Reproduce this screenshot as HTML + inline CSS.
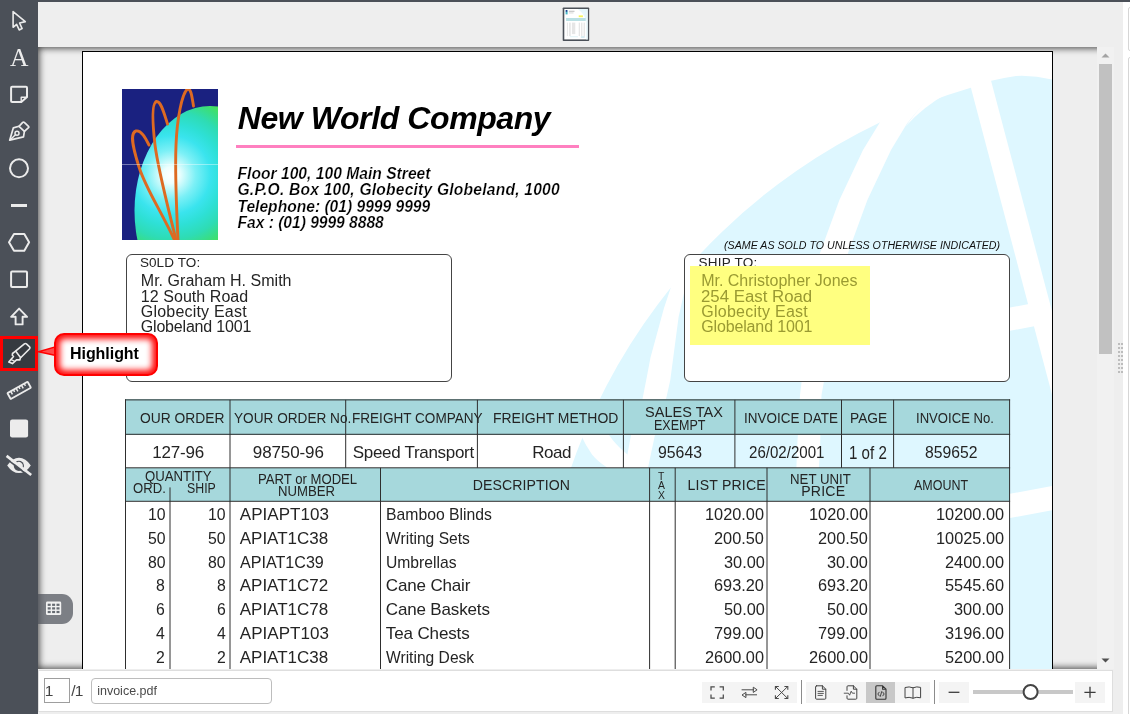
<!DOCTYPE html>
<html lang="en">
<head>
<meta charset="utf-8">
<title>invoice.pdf</title>
<style>
html,body{margin:0;padding:0}
body{width:1130px;height:714px;overflow:hidden;background:#eeeeee;position:relative;font-family:"Liberation Sans",Arial,sans-serif;color:#333}
#app{position:absolute;left:0;top:0;width:1130px;height:714px;overflow:hidden;will-change:transform}
.abs{position:absolute}
.t{position:absolute;white-space:nowrap;color:#242424;transform-origin:0 50%}
#side{position:absolute;left:0;top:0;width:38px;height:714px;background:#4b5058}
#topline{position:absolute;left:0;top:0;width:1130px;height:2px;background:#4b5058}
#viewer{position:absolute;left:38px;top:47px;width:1110px;height:622px;overflow:hidden;background:#eeeeee;box-shadow:inset 0 0 7px 1px rgba(0,0,0,.75)}
#page{position:absolute;left:44px;top:4px;width:969px;height:1300px;background:#fff;border:1px solid #000;overflow:hidden}
#bbar{position:absolute;left:38px;top:670px;width:1073px;height:40px;background:#fff;border:1px solid #dedede}
.hd{position:absolute;background:#a6d8dc}
.ln{position:absolute;background:#484848}
.btn{position:absolute;top:682px;height:21px;background:#f4f4f4}
</style>
</head>
<body>
<div id="app">

<div id="topline"></div>
<svg class="abs" style="left:562px;top:7px" width="28" height="35" viewBox="0 0 28 35">
<rect x="0.7" y="0.4" width="26.5" height="33.7" rx="0.8" fill="#4b5058"/>
<g transform="translate(2.3 2)">
<rect width="23.4" height="30.4" fill="#fff"/>
<path d="M13.5 0H23.4V30.4H22V12Q20 5 13.5 0Z" fill="#e6f7fc"/>
<rect x="1.3" y="1.2" width="2" height="4.2" fill="#49b9c9"/><rect x="1.5" y="1" width="1.4" height="1.8" fill="#2c3a90"/>
<rect x="4.6" y="1.8" width="5.6" height="0.8" fill="#aaa"/><rect x="4.6" y="3.6" width="4.6" height="0.7" fill="#c8c8c8"/>
<rect x="14.4" y="6.4" width="4.2" height="1.8" fill="#f4f45a"/>
<rect x="1.8" y="9" width="19.6" height="3" fill="#b9e0e4"/>
<g fill="#e6e6e6"><rect x="2.6" y="13.6" width="1" height="13.5"/><rect x="4.8" y="13.6" width="1.6" height="13.5"/><rect x="7.6" y="13.6" width="3.4" height="11.5"/><rect x="14.4" y="13.6" width="1.3" height="13.5"/><rect x="16.8" y="13.6" width="1.3" height="13.5"/><rect x="19.3" y="13.6" width="1.3" height="14"/></g>
<rect x="5.6" y="27.4" width="8" height="0.8" fill="#d6eef4"/><rect x="16.6" y="27.4" width="3.8" height="1.3" fill="#c6e4ee"/>
</g>
</svg>
<div id="viewer"><div id="page">
<svg class="abs" style="left:0;top:0" width="969" height="640" viewBox="83 52 969 640">
<path d="M1060 80L1052 79.4Q1034 75.2 1016 76Q992 79 970 88A601.4 601.4 0 0 0 537.6 665L537.6 760L1060 760Z" fill="#def7ff"/>
<g fill="#fff" stroke="none">
<path d="M953 20L1064 440L1086 440L975 20Z"/>
<path d="M893 100L881 120.5L863 150L839.4 200L820 253L809 320L800 395L797 450L796 480L818 480L820 450L821.5 395L835 320L848 253L867.4 200L891 150L907 123.5L925 102L940 80Z"/>
<path d="M696 255L684 293L678.6 317L670.3 380L666.5 397L655 434.8L648.1 467.2L646 478L622 478L627.4 454.4L631.1 434.8L642.5 399L647 376L650.5 357.6L664 308L672.5 282.5L680 268Z"/>
<path d="M570 418L597 418L608.8 434.8Q616 445 623.7 451.2L627.4 454.4L640 478L612 478L606.7 467.2Q598 462 592 454.6Q586 446 580.7 434.8Z"/>
<path d="M948 93L925 101L905 127Q924 106 948 93Z"/>
<path d="M998 309.8L1042 301.6L1042 324.8L998 333Z"/>
<path d="M998 496L1062 484.2L1062 508.4L998 520.2Z"/>
</g>
</svg>
<svg class="abs" style="left:39px;top:37px" width="96" height="151" viewBox="0 0 96 151">
<defs><radialGradient id="lg" gradientUnits="userSpaceOnUse" cx="49" cy="86" r="82">
<stop offset="0" stop-color="#ffffff"/><stop offset="0.10" stop-color="#eefffe"/><stop offset="0.30" stop-color="#7cf0f6"/><stop offset="0.48" stop-color="#3ae4ee"/><stop offset="0.62" stop-color="#2ee0d6"/><stop offset="0.78" stop-color="#2edcb4"/><stop offset="0.92" stop-color="#3ade7c"/><stop offset="1" stop-color="#48e25a"/></radialGradient>
<clipPath id="lc"><rect width="96" height="151"/></clipPath></defs>
<g clip-path="url(#lc)">
<rect width="96" height="151" fill="#1a2180"/>
<ellipse cx="88" cy="122" rx="75.5" ry="105" fill="url(#lg)"/>
<g fill="none" stroke="#de6a22" stroke-width="2.9" stroke-linecap="round">
<path d="M52.5 151 C38 120 24 100 17 78 C10 56 8 44 14 42 C19 41 23 48 27 56"/>
<path d="M54 151 C44 110 36 80 33 56 C30 30 30 14 34.5 12.5 C39 12 42 24 45.5 35"/>
<path d="M56 151 C54 110 53 80 54 56 C55 30 60 4 65.5 0 C69 -1 70 8 71.5 17"/>
</g>
</g>
<rect x="0" y="75" width="96" height="1" fill="#fff" opacity=".4"/>
</svg>
<span class="t" style="left:154.70px;top:50px;font-size:32.00px;line-height:32.00px;letter-spacing:-0.404px;font-weight:bold;font-style:italic;color:#000;">New World Company</span>
<div class="abs" style="left:153px;top:93px;width:343px;height:3px;background:#ff80c0"></div>
<span class="t" style="left:154.50px;top:114px;font-size:15.60px;line-height:15.60px;letter-spacing:0.023px;font-weight:bold;font-style:italic;color:#000;-webkit-text-stroke:0.22px #fff;">Floor 100, 100 Main Street</span>
<span class="t" style="left:154.50px;top:130px;font-size:15.60px;line-height:15.60px;letter-spacing:0.216px;font-weight:bold;font-style:italic;color:#000;-webkit-text-stroke:0.22px #fff;">G.P.O. Box 100, Globecity Globeland, 1000</span>
<span class="t" style="left:154.50px;top:147px;font-size:15.60px;line-height:15.60px;font-weight:bold;font-style:italic;color:#000;-webkit-text-stroke:0.22px #fff;">Telephone: (01) 9999 9999</span>
<span class="t" style="left:154.50px;top:163px;font-size:15.60px;line-height:15.60px;letter-spacing:-0.014px;font-weight:bold;font-style:italic;color:#000;-webkit-text-stroke:0.22px #fff;">Fax : (01) 9999 8888</span>
<div class="abs" style="left:43px;top:202px;width:324px;height:126px;border:1px solid #444;border-radius:6px;background:#fff"></div>
<span class="t" style="left:56.90px;top:204px;font-size:13.50px;line-height:13.50px;letter-spacing:0.109px;">S0LD TO:</span>
<span class="t" style="left:57.80px;top:221px;font-size:16.00px;line-height:16.00px;letter-spacing:0.025px;">Mr. Graham H. Smith</span>
<span class="t" style="left:57.80px;top:237px;font-size:16.00px;line-height:16.00px;letter-spacing:0.054px;">12 South Road</span>
<span class="t" style="left:57.80px;top:252px;font-size:16.00px;line-height:16.00px;letter-spacing:0.204px;">Globecity East</span>
<span class="t" style="left:57.80px;top:267px;font-size:16.00px;line-height:16.00px;letter-spacing:-0.192px;">Globeland 1001</span>
<span class="t" style="left:640.60px;top:189px;font-size:10.00px;line-height:10.00px;transform:scaleX(1.0655);font-style:italic;color:#111;">(SAME AS SOLD TO UNLESS OTHERWISE INDICATED)</span>
<div class="abs" style="left:601px;top:202px;width:324px;height:126px;border:1px solid #444;border-radius:6px;background:#fff"></div>
<span class="t" style="left:615.60px;top:204px;font-size:13.50px;line-height:13.50px;letter-spacing:0.239px;">SHIP TO:</span>
<div class="abs" style="left:607px;top:214px;width:180px;height:79px;background:#ffff80"></div>
<span class="t" style="left:618.20px;top:221px;font-size:16.00px;line-height:16.00px;letter-spacing:-0.011px;color:#9a9a32;">Mr. Christopher Jones</span>
<span class="t" style="left:618.20px;top:237px;font-size:16.00px;line-height:16.00px;transform:scaleX(1.0505);color:#9a9a32;">254 East Road</span>
<span class="t" style="left:618.20px;top:252px;font-size:16.00px;line-height:16.00px;letter-spacing:0.265px;color:#9a9a32;">Globecity East</span>
<span class="t" style="left:618.20px;top:267px;font-size:16.00px;line-height:16.00px;letter-spacing:-0.138px;color:#9a9a32;">Globeland 1001</span>
<div class="hd" style="left:42px;top:347px;width:885px;height:36px"></div>
<div class="hd" style="left:42px;top:416px;width:885px;height:33px"></div>
<div class="abs" style="left:42px;top:449px;width:885px;height:400px;background:#fff"></div>
<div class="abs" style="left:42px;top:383px;width:352px;height:33px;background:#fff"></div>
<svg class="abs" style="left:0;top:0" width="969" height="688" viewBox="83 52 969 688"><path d="M125.00 399.90H1010.10M125.00 434.30H1010.10M125.00 467.80H1010.10M125.00 501.30H1010.10M125.50 399.40V740.00M1009.60 399.40V740.00M230.00 399.90V467.80M345.70 399.90V467.80M477.40 399.90V467.80M623.40 399.90V467.80M734.90 399.90V467.80M841.50 399.90V467.80M893.60 399.90V467.80M230.00 467.80V740.00M380.50 467.80V740.00M649.60 467.80V740.00M675.20 467.80V740.00M767.00 467.80V740.00M870.00 467.80V740.00M170.00 487.40V740.00" fill="none" stroke="#2e2e2e" stroke-width="1"/></svg>
<span class="t" style="left:56.50px;top:359px;font-size:14.50px;line-height:14.50px;transform:scaleX(0.9536);">OUR ORDER</span>
<span class="t" style="left:151.30px;top:359px;font-size:14.50px;line-height:14.50px;transform:scaleX(0.9393);">YOUR ORDER No.</span>
<span class="t" style="left:268.70px;top:359px;font-size:14.50px;line-height:14.50px;transform:scaleX(0.9353);">FREIGHT COMPANY</span>
<span class="t" style="left:409.50px;top:359px;font-size:14.50px;line-height:14.50px;transform:scaleX(0.9622);">FREIGHT METHOD</span>
<span class="t" style="left:562.00px;top:353px;font-size:14.50px;line-height:14.50px;letter-spacing:0.044px;">SALES TAX</span>
<span class="t" style="left:570.50px;top:366px;font-size:14.50px;line-height:14.50px;transform:scaleX(0.8621);">EXEMPT</span>
<span class="t" style="left:661.20px;top:359px;font-size:14.50px;line-height:14.50px;transform:scaleX(0.9285);">INVOICE DATE</span>
<span class="t" style="left:767.30px;top:359px;font-size:14.50px;line-height:14.50px;transform:scaleX(0.9484);">PAGE</span>
<span class="t" style="left:832.80px;top:359px;font-size:14.50px;line-height:14.50px;transform:scaleX(0.9035);">INVOICE No.</span>
<span class="t" style="left:69.30px;top:392px;font-size:17.00px;line-height:17.00px;letter-spacing:-0.188px;">127-96</span>
<span class="t" style="left:169.80px;top:392px;font-size:17.00px;line-height:17.00px;letter-spacing:-0.106px;">98750-96</span>
<span class="t" style="left:269.70px;top:392px;font-size:17.00px;line-height:17.00px;letter-spacing:-0.300px;">Speed Transport</span>
<span class="t" style="left:449.20px;top:392px;font-size:17.00px;line-height:17.00px;letter-spacing:-0.449px;">Road</span>
<span class="t" style="left:574.70px;top:392px;font-size:17.00px;line-height:17.00px;transform:scaleX(0.9307);">95643</span>
<span class="t" style="left:666.00px;top:392px;font-size:17.00px;line-height:17.00px;transform:scaleX(0.8862);">26/02/2001</span>
<span class="t" style="left:766.00px;top:393px;font-size:17.60px;line-height:17.60px;transform:scaleX(0.8584);">1 of 2</span>
<span class="t" style="left:841.90px;top:392px;font-size:17.00px;line-height:17.00px;transform:scaleX(0.9255);">859652</span>
<span class="t" style="left:62.00px;top:417px;font-size:14.10px;line-height:14.10px;transform:scaleX(0.9356);">QUANTITY</span>
<span class="t" style="left:49.60px;top:429px;font-size:14.10px;line-height:14.10px;transform:scaleX(0.9305);">ORD.</span>
<span class="t" style="left:103.60px;top:429px;font-size:14.10px;line-height:14.10px;transform:scaleX(0.8751);">SHIP</span>
<span class="t" style="left:174.60px;top:420px;font-size:14.10px;line-height:14.10px;transform:scaleX(0.9309);">PART or MODEL</span>
<span class="t" style="left:195.20px;top:432px;font-size:14.10px;line-height:14.10px;transform:scaleX(0.9328);">NUMBER</span>
<span class="t" style="left:389.80px;top:426px;font-size:14.10px;line-height:14.10px;letter-spacing:0.084px;">DESCRIPTION</span>
<span class="t" style="left:575.43px;top:419px;font-size:10.80px;line-height:10.80px;transform:scaleX(0.9600);">T</span>
<span class="t" style="left:575.14px;top:428px;font-size:10.80px;line-height:10.80px;transform:scaleX(0.9600);">A</span>
<span class="t" style="left:575.14px;top:438px;font-size:10.80px;line-height:10.80px;transform:scaleX(0.9600);">X</span>
<span class="t" style="left:604.50px;top:426px;font-size:14.10px;line-height:14.10px;letter-spacing:0.196px;">LIST PRICE</span>
<span class="t" style="left:706.50px;top:420px;font-size:14.10px;line-height:14.10px;transform:scaleX(0.9388);">NET UNIT</span>
<span class="t" style="left:718.20px;top:432px;font-size:14.10px;line-height:14.10px;letter-spacing:0.228px;">PRICE</span>
<span class="t" style="left:831.30px;top:426px;font-size:14.10px;line-height:14.10px;transform:scaleX(0.8855);">AMOUNT</span>
<span class="t" style="left:64.62px;top:454px;font-size:17.00px;line-height:17.00px;transform:scaleX(0.9300);">10</span>
<span class="t" style="left:124.72px;top:454px;font-size:17.00px;line-height:17.00px;transform:scaleX(0.9300);">10</span>
<span class="t" style="left:156.80px;top:454px;font-size:17.00px;line-height:17.00px;letter-spacing:0.034px;">APIAPT103</span>
<span class="t" style="left:302.80px;top:454px;font-size:17.00px;line-height:17.00px;transform:scaleX(0.9270);">Bamboo Blinds</span>
<span class="t" style="left:622.40px;top:454px;font-size:17.00px;line-height:17.00px;transform:scaleX(0.9600);">1020.00</span>
<span class="t" style="left:725.50px;top:454px;font-size:17.00px;line-height:17.00px;transform:scaleX(0.9600);">1020.00</span>
<span class="t" style="left:852.83px;top:454px;font-size:17.00px;line-height:17.00px;transform:scaleX(0.9600);">10200.00</span>
<span class="t" style="left:64.62px;top:478px;font-size:17.00px;line-height:17.00px;transform:scaleX(0.9300);">50</span>
<span class="t" style="left:124.72px;top:478px;font-size:17.00px;line-height:17.00px;transform:scaleX(0.9300);">50</span>
<span class="t" style="left:156.80px;top:478px;font-size:17.00px;line-height:17.00px;letter-spacing:-0.025px;">APIAT1C38</span>
<span class="t" style="left:302.80px;top:478px;font-size:17.00px;line-height:17.00px;transform:scaleX(0.9187);">Writing Sets</span>
<span class="t" style="left:631.48px;top:478px;font-size:17.00px;line-height:17.00px;transform:scaleX(0.9600);">200.50</span>
<span class="t" style="left:734.58px;top:478px;font-size:17.00px;line-height:17.00px;transform:scaleX(0.9600);">200.50</span>
<span class="t" style="left:852.83px;top:478px;font-size:17.00px;line-height:17.00px;transform:scaleX(0.9600);">10025.00</span>
<span class="t" style="left:64.62px;top:502px;font-size:17.00px;line-height:17.00px;transform:scaleX(0.9300);">80</span>
<span class="t" style="left:124.72px;top:502px;font-size:17.00px;line-height:17.00px;transform:scaleX(0.9300);">80</span>
<span class="t" style="left:156.80px;top:502px;font-size:17.00px;line-height:17.00px;transform:scaleX(0.9469);">APIAT1C39</span>
<span class="t" style="left:302.80px;top:502px;font-size:17.00px;line-height:17.00px;transform:scaleX(0.9214);">Umbrellas</span>
<span class="t" style="left:640.57px;top:502px;font-size:17.00px;line-height:17.00px;transform:scaleX(0.9600);">30.00</span>
<span class="t" style="left:743.67px;top:502px;font-size:17.00px;line-height:17.00px;transform:scaleX(0.9600);">30.00</span>
<span class="t" style="left:861.90px;top:502px;font-size:17.00px;line-height:17.00px;transform:scaleX(0.9600);">2400.00</span>
<span class="t" style="left:73.41px;top:525px;font-size:17.00px;line-height:17.00px;transform:scaleX(0.9300);">8</span>
<span class="t" style="left:133.51px;top:525px;font-size:17.00px;line-height:17.00px;transform:scaleX(0.9300);">8</span>
<span class="t" style="left:156.80px;top:525px;font-size:17.00px;line-height:17.00px;letter-spacing:-0.025px;">APIAT1C72</span>
<span class="t" style="left:302.80px;top:525px;font-size:17.00px;line-height:17.00px;letter-spacing:-0.154px;">Cane Chair</span>
<span class="t" style="left:631.48px;top:525px;font-size:17.00px;line-height:17.00px;transform:scaleX(0.9600);">693.20</span>
<span class="t" style="left:734.58px;top:525px;font-size:17.00px;line-height:17.00px;transform:scaleX(0.9600);">693.20</span>
<span class="t" style="left:861.90px;top:525px;font-size:17.00px;line-height:17.00px;transform:scaleX(0.9600);">5545.60</span>
<span class="t" style="left:73.41px;top:549px;font-size:17.00px;line-height:17.00px;transform:scaleX(0.9300);">6</span>
<span class="t" style="left:133.51px;top:549px;font-size:17.00px;line-height:17.00px;transform:scaleX(0.9300);">6</span>
<span class="t" style="left:156.80px;top:549px;font-size:17.00px;line-height:17.00px;letter-spacing:-0.025px;">APIAT1C78</span>
<span class="t" style="left:302.80px;top:549px;font-size:17.00px;line-height:17.00px;letter-spacing:-0.158px;">Cane Baskets</span>
<span class="t" style="left:640.57px;top:549px;font-size:17.00px;line-height:17.00px;transform:scaleX(0.9600);">50.00</span>
<span class="t" style="left:743.67px;top:549px;font-size:17.00px;line-height:17.00px;transform:scaleX(0.9600);">50.00</span>
<span class="t" style="left:870.98px;top:549px;font-size:17.00px;line-height:17.00px;transform:scaleX(0.9600);">300.00</span>
<span class="t" style="left:73.41px;top:573px;font-size:17.00px;line-height:17.00px;transform:scaleX(0.9300);">4</span>
<span class="t" style="left:133.51px;top:573px;font-size:17.00px;line-height:17.00px;transform:scaleX(0.9300);">4</span>
<span class="t" style="left:156.80px;top:573px;font-size:17.00px;line-height:17.00px;letter-spacing:0.034px;">APIAPT103</span>
<span class="t" style="left:302.80px;top:573px;font-size:17.00px;line-height:17.00px;letter-spacing:-0.126px;">Tea Chests</span>
<span class="t" style="left:631.48px;top:573px;font-size:17.00px;line-height:17.00px;transform:scaleX(0.9600);">799.00</span>
<span class="t" style="left:734.58px;top:573px;font-size:17.00px;line-height:17.00px;transform:scaleX(0.9600);">799.00</span>
<span class="t" style="left:861.90px;top:573px;font-size:17.00px;line-height:17.00px;transform:scaleX(0.9600);">3196.00</span>
<span class="t" style="left:73.41px;top:597px;font-size:17.00px;line-height:17.00px;transform:scaleX(0.9300);">2</span>
<span class="t" style="left:133.51px;top:597px;font-size:17.00px;line-height:17.00px;transform:scaleX(0.9300);">2</span>
<span class="t" style="left:156.80px;top:597px;font-size:17.00px;line-height:17.00px;letter-spacing:-0.025px;">APIAT1C38</span>
<span class="t" style="left:302.80px;top:597px;font-size:17.00px;line-height:17.00px;transform:scaleX(0.9181);">Writing Desk</span>
<span class="t" style="left:622.40px;top:597px;font-size:17.00px;line-height:17.00px;transform:scaleX(0.9600);">2600.00</span>
<span class="t" style="left:725.50px;top:597px;font-size:17.00px;line-height:17.00px;transform:scaleX(0.9600);">2600.00</span>
<span class="t" style="left:861.90px;top:597px;font-size:17.00px;line-height:17.00px;transform:scaleX(0.9600);">5200.00</span>
<span class="t" style="left:64.62px;top:620px;font-size:17.00px;line-height:17.00px;transform:scaleX(0.9300);">12</span>
<span class="t" style="left:124.72px;top:620px;font-size:17.00px;line-height:17.00px;transform:scaleX(0.9300);">12</span>
<span class="t" style="left:156.80px;top:620px;font-size:17.00px;line-height:17.00px;letter-spacing:-0.025px;">APIAT1C39</span>
<span class="t" style="left:302.80px;top:620px;font-size:17.00px;line-height:17.00px;transform:scaleX(0.9158);">Beach Mats</span>
<span class="t" style="left:640.57px;top:620px;font-size:17.00px;line-height:17.00px;transform:scaleX(0.9600);">15.00</span>
<span class="t" style="left:743.67px;top:620px;font-size:17.00px;line-height:17.00px;transform:scaleX(0.9600);">15.00</span>
<span class="t" style="left:870.98px;top:620px;font-size:17.00px;line-height:17.00px;transform:scaleX(0.9600);">180.00</span>
</div></div>
<!-- ===== vertical scrollbar ===== -->
<div class="abs" style="left:1114px;top:47px;width:9px;height:623px;background:#eeeeee"></div>
<div class="abs" style="left:1097px;top:47px;width:17px;height:622px;background:#f1f1f1"></div>
<div class="abs" style="left:1099px;top:64px;width:13px;height:290px;background:#c1c1c1"></div>
<svg class="abs" style="left:1097px;top:47px" width="17" height="622" viewBox="0 0 17 622">
<path d="M4.5 10.5L8.5 6.5L12.5 10.5Z" fill="#a3a3a3"/>
<path d="M4.5 611.5L8.5 615.5L12.5 611.5Z" fill="#505050"/>
</svg>
<!-- splitter grip -->
<svg class="abs" style="left:1118px;top:343px" width="6" height="32" viewBox="0 0 6 32">
<g fill="#bdbdbd"><rect x="0" y="0" width="2" height="2"/><rect x="3" y="0" width="2" height="2"/><rect x="0" y="4" width="2" height="2"/><rect x="3" y="4" width="2" height="2"/><rect x="0" y="8" width="2" height="2"/><rect x="3" y="8" width="2" height="2"/><rect x="0" y="12" width="2" height="2"/><rect x="3" y="12" width="2" height="2"/><rect x="0" y="16" width="2" height="2"/><rect x="3" y="16" width="2" height="2"/><rect x="0" y="20" width="2" height="2"/><rect x="3" y="20" width="2" height="2"/><rect x="0" y="24" width="2" height="2"/><rect x="3" y="24" width="2" height="2"/><rect x="0" y="28" width="2" height="2"/><rect x="3" y="28" width="2" height="2"/></g>
</svg>
<!-- right panel sliver -->
<div class="abs" style="left:1123px;top:2px;width:7px;height:712px;background:#fff"></div>
<div class="abs" style="left:1128px;top:7px;width:6px;height:44px;border:1px solid #d6d6d6;border-radius:2px;box-sizing:border-box"></div>
<div class="abs" style="left:1128px;top:57px;width:6px;height:660px;border:1px solid #d6d6d6;border-radius:2px;box-sizing:border-box"></div>

<!-- ===== left tab (thumbnail toggle) ===== -->
<div class="abs" style="left:38px;top:594px;width:35px;height:30px;background:rgba(75,80,88,.7);border-radius:0 11px 11px 0"></div>
<svg class="abs" style="left:46px;top:601px" width="16" height="15" viewBox="0 0 16 15">
<rect x="0" y="0.5" width="15.2" height="13.6" rx="1.4" fill="#f2f2f2"/>
<g fill="#666b72"><rect x="1.7" y="2.7" width="3" height="2.2"/><rect x="6.1" y="2.7" width="3" height="2.2"/><rect x="10.5" y="2.7" width="3" height="2.2"/><rect x="1.7" y="6.3" width="3" height="2.2"/><rect x="6.1" y="6.3" width="3" height="2.2"/><rect x="10.5" y="6.3" width="3" height="2.2"/><rect x="1.7" y="9.9" width="3" height="2.2"/><rect x="6.1" y="9.9" width="3" height="2.2"/><rect x="10.5" y="9.9" width="3" height="2.2"/></g>
</svg>

<!-- ===== sidebar ===== -->
<div id="side"></div>
<div class="abs" style="left:0;top:336px;width:38px;height:35px;background:#363a40;border:3px solid #ff0000;box-sizing:border-box"></div>
<svg class="abs" style="left:0;top:0" width="38" height="500" viewBox="0 0 38 500" fill="none" stroke="#ebebeb" stroke-width="1.8" stroke-linejoin="round" stroke-linecap="round">
<!-- select arrow -->
<path d="M13.1 11.6V27.3L16.6 24.3L19.2 29.9L22.1 28.6L19.6 23L25.3 21.6Z" stroke-width="1.6"/>
<!-- note -->
<path d="M12.1 86.7H26A1 1 0 0 1 27 87.7V97L21.3 102H12.1A1 1 0 0 1 11.1 101V87.7A1 1 0 0 1 12.1 86.7Z" stroke-width="2"/>
<path d="M26.6 97.3H21.2V101.8" stroke-width="1.4"/>
<!-- pen nib -->
<path d="M22.7 122.4Q23.5 121.7 24.3 122.4L28.5 126.3Q29.2 127 28.5 127.7L24.4 131.4L19 126.3Z" stroke-width="1.7"/>
<path d="M19 126.3L13.3 127.9L9.7 140.2L23.5 136.8L24.4 131.4" stroke-width="1.7"/>
<circle cx="17" cy="133.3" r="2" stroke-width="1.5"/>
<path d="M15.5 134.8L10.2 139.8" stroke-width="1.5"/>
<!-- circle -->
<circle cx="19" cy="168.3" r="9" stroke-width="2"/>
<!-- line -->
<rect x="11" y="204" width="16" height="3" fill="#ebebeb" stroke="none"/>
<!-- hexagon -->
<path d="M9 242.3L14 233.9H24.3L29.1 242.3L24.3 250.8H14Z" stroke-width="2"/>
<!-- square -->
<rect x="11.1" y="271.4" width="15.9" height="15.7" rx="1" stroke-width="2"/>
<!-- arrow up -->
<path d="M19.1 308.6L27.1 316.8H22.6V324.4H15.6V316.8H11.1Z" stroke-width="1.9"/>
<!-- highlighter -->
<path d="M14.9 351.6L24.4 343.8Q25.4 343.1 26.4 343.9L29.6 346.9Q30.4 347.8 29.6 348.8L20.4 358L19.8 359.9L16.8 359.7L12.4 363.6L8.8 362.1L13.5 356.5L12.3 355.3L12.5 353.5Z" stroke-width="1.6"/>
<path d="M15.7 351.3L20.5 357.5" stroke-width="1.6"/>
<path d="M11.2 359.6L14.6 361.2" stroke-width="1.2"/>
<!-- ruler -->
<g transform="translate(19.15 390.4) rotate(-29.4)" stroke-width="1.9">
<rect x="-11.6" y="-3.4" width="23.2" height="6.8" rx="0.6"/>
<path d="M-7.8 -3V0.2M-4.7 -3V-0.9M-1.6 -3V0.2M1.5 -3V-0.9M4.6 -3V0.2M7.7 -3V-0.9" stroke-width="1.5" stroke-linecap="butt"/>
</g>
<!-- filled square -->
<rect x="10" y="419.4" width="18.1" height="18.1" rx="2.2" fill="#ececec" stroke="none"/>
<!-- eye slash -->
<path d="M7.2 465.4Q12.4 457.7 19 457.7Q25.6 457.7 30.8 465.4Q25.6 473.1 19 473.1Q12.4 473.1 7.2 465.4Z" fill="#ececec" stroke="none"/>
<circle cx="18.9" cy="465.8" r="5.1" fill="#4b5058" stroke="none"/>
<path d="M15.95 463.5A3.7 3.7 0 0 1 21.85 468.1Z" fill="#ececec" stroke="none"/>
<path d="M5.4 457.9L30 477" stroke="#4b5058" stroke-width="1.7" stroke-linecap="butt"/>
<path d="M6.6 455.9L31.2 475" stroke="#ececec" stroke-width="2.7" stroke-linecap="butt"/>
</svg>
<span class="abs" style="left:10px;top:44px;width:18px;text-align:center;font-family:'Liberation Serif',serif;font-size:25.5px;line-height:28px;color:#ececec">A</span>

<!-- ===== callout ===== -->
<svg class="abs" style="left:36px;top:330px" width="126" height="50" viewBox="36 330 126 50">
<defs>
<filter id="blur" x="-10%" y="-20%" width="120%" height="140%"><feGaussianBlur stdDeviation="3"/></filter>
<clipPath id="cc"><rect x="55" y="334" width="102" height="41" rx="9"/></clipPath>
</defs>
<path d="M38.6 351.8L57 346.4V355.8Z" fill="#ff4a4a" stroke="#ff0000" stroke-width="1.5" stroke-linejoin="round"/>
<rect x="55" y="334" width="102" height="41" rx="9" fill="#fff"/>
<g clip-path="url(#cc)"><rect x="55" y="334" width="102" height="41" rx="9" fill="none" stroke="#ff0000" stroke-width="9.5" filter="url(#blur)"/></g>
<rect x="55" y="334" width="102" height="41" rx="9" fill="none" stroke="#ff0000" stroke-width="2"/>
</svg>
<span class="abs" style="left:70px;top:344.5px;font-size:16px;line-height:18px;font-weight:bold;color:#000;white-space:nowrap;letter-spacing:-0.05px">Highlight</span>

<!-- ===== bottom toolbar ===== -->
<div id="bbar"></div>
<div class="abs" style="left:44px;top:678px;width:26px;height:25px;border:1px solid #9e9e9e;box-sizing:border-box;background:#fff"></div>
<span class="abs" style="left:44.8px;top:681px;font-size:15.5px;line-height:20px;color:#444">1</span>
<span class="abs" style="left:71.3px;top:681px;font-size:15.5px;line-height:20px;color:#444;letter-spacing:-0.9px">/1</span>
<div class="abs" style="left:91px;top:678px;width:181px;height:26px;border:1px solid #bdbdbd;border-radius:4px;box-sizing:border-box;background:#fff"></div>
<span class="abs" style="left:97.2px;top:684px;font-size:12.5px;line-height:15px;color:#4a4a4a">invoice.pdf</span>

<div class="btn" style="left:702px;width:95px"></div>
<div class="abs" style="left:801px;top:680px;width:1px;height:24px;background:#8c8c8c"></div>
<div class="btn" style="left:806px;width:124px"></div>
<div class="btn" style="left:866px;width:29px;background:#c8c8c8"></div>
<div class="abs" style="left:934px;top:680px;width:1px;height:24px;background:#8c8c8c"></div>
<div class="btn" style="left:939px;width:30px"></div>
<div class="btn" style="left:1075px;width:30px"></div>
<div class="abs" style="left:973px;top:690px;width:100px;height:4px;background:#c8c8c8"></div>
<svg class="abs" style="left:700px;top:676px" width="410" height="32" viewBox="700 676 410 32" fill="none" stroke="#444" stroke-width="1.1" stroke-linecap="round" stroke-linejoin="round">
<!-- fullscreen -->
<path d="M711 690.4V686.8H714.8M719.6 686.8H723.3V690.4M723.3 694.6V698.2H719.6M714.8 698.2H711V694.6" stroke-width="1.25" stroke="#4a4a4a" stroke-linecap="butt" stroke-linejoin="miter"/>
<!-- swap -->
<path d="M742 689.8H753.6M753.6 687.4L757.1 689.8L753.6 692.2ZM745.6 694.8H756.6M745.6 692.6L742 695L745.6 697.4Z" stroke-width="1" stroke="#4a4a4a"/>
<!-- expand -->
<path d="M776 687L787.2 698M787.2 687L776 698" stroke-width="1" stroke="#4a4a4a"/>
<path d="M775.4 689.8V686.5H778.8M784.4 686.5H787.8V689.8M787.8 695.2V698.5H784.4M778.8 698.5H775.4V695.2" stroke-width="1.1" stroke="#4a4a4a" stroke-linecap="butt" stroke-linejoin="miter"/>
<!-- doc -->
<path d="M816.6 685.8H822.4L825.8 689.2V698.2Q825.8 699.2 824.8 699.2H816.6Q815.6 699.2 815.6 698.2V686.8Q815.6 685.8 816.6 685.8Z M822.4 685.8V689.2H825.8" stroke-width="1"/>
<path d="M818 691.4H823.4M818 693.4H823.4M818 695.4H822.4" stroke-width=".9"/>
<!-- doc pulse -->
<path d="M847 690.4V686.8Q847 685.8 848 685.8H853.4L856.8 689.2V698.2Q856.8 699.2 855.8 699.2H848Q847 699.2 847 698.2V695.8 M853.4 685.8V689.2H856.8" stroke-width="1"/>
<path d="M844.2 693.2H848.4L849.6 695.2L851.2 691.2L852.4 693.2H854.6" stroke-width=".9"/>
<!-- doc code (selected) -->
<path d="M876.8 685.8H882.6L886 689.2V698.2Q886 699.2 885 699.2H876.8Q875.8 699.2 875.8 698.2V686.8Q875.8 685.8 876.8 685.8Z M882.6 685.8V689.2H886" stroke-width="1.1" stroke="#333"/>
<path d="M879.2 692.2L877.8 694L879.2 695.8M882.8 692.2L884.2 694L882.8 695.8M881.7 691.6L880.3 696.4" stroke-width=".9" stroke="#333"/>
<!-- book -->
<path d="M905.4 687.4Q909.2 686.2 913 687.8Q916.8 686.2 920.6 687.4V697.8Q916.8 696.6 913 698.2Q909.2 696.6 905.4 697.8Z M913 687.8V698.2" stroke-width="1"/>
<!-- minus / plus -->
<path d="M948.6 692.3H959.4" stroke-width="1.3" stroke="#3c3c3c" stroke-linecap="butt"/>
<path d="M1084.4 692.3H1095.6M1090 686.8V697.8" stroke-width="1.3" stroke="#3c3c3c" stroke-linecap="butt"/>
<!-- slider handle -->
<circle cx="1030.6" cy="692" r="7" fill="#fff" stroke="#444" stroke-width="2"/>
</svg>
</div>
</body>
</html>
